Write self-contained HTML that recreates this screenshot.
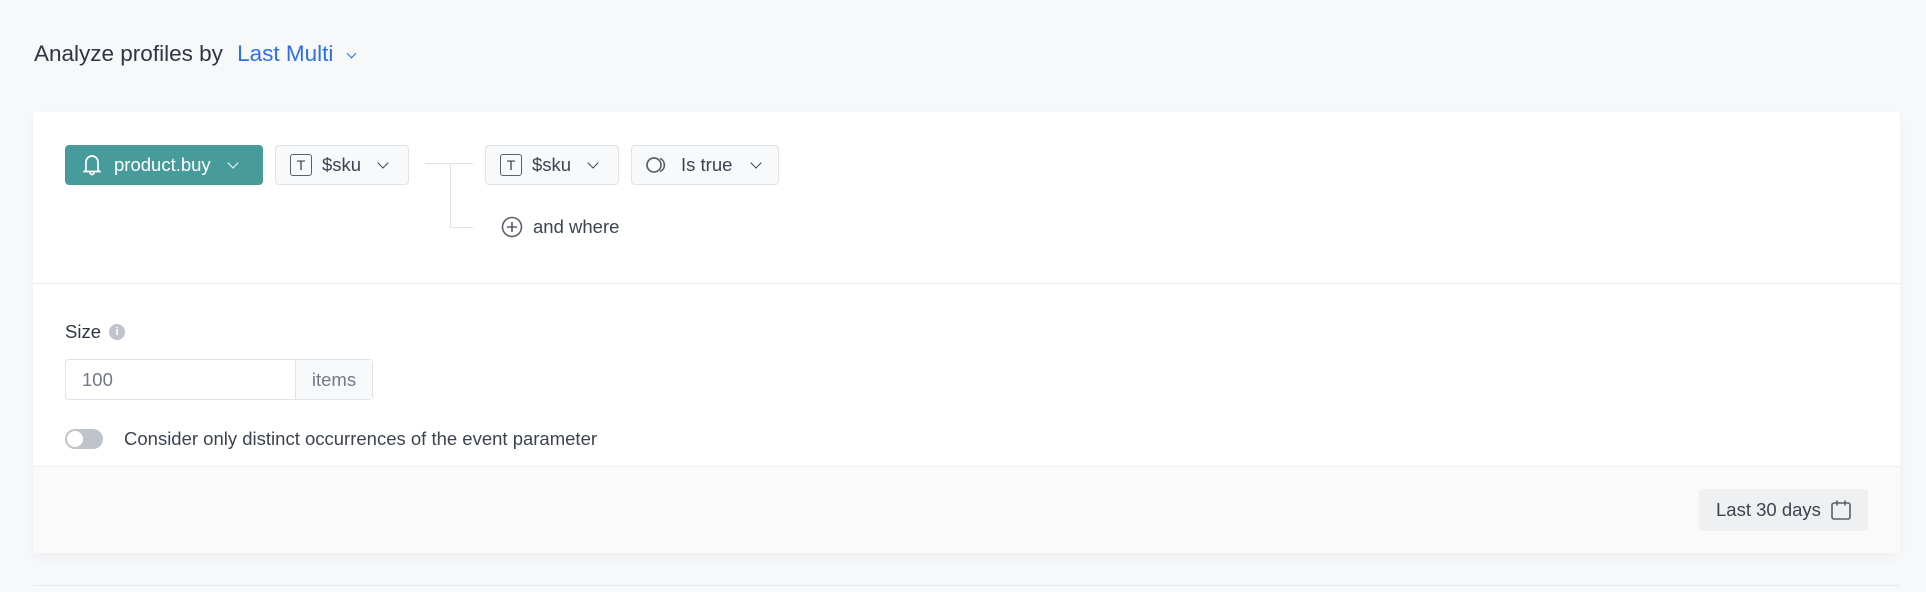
<!DOCTYPE html>
<html><head><meta charset="utf-8"><style>
*{box-sizing:border-box;margin:0;padding:0}
body{width:1926px;height:592px;background:#f7f8fa;font-family:"Liberation Sans",sans-serif;color:#3c4350;position:relative;overflow:hidden}
.abs{position:absolute}
.title{left:34px;top:41px;font-size:22.5px;color:#2f3542}
.title b{font-weight:normal;color:#2f6fe6;margin-left:8px}
.card{left:33px;top:112px;width:1867px;height:441px;background:#fff;border-radius:4px;box-shadow:0 4px 12px rgba(0,0,0,.04)}
.btn{position:absolute;height:40px;border:1px solid #dfe2e7;border-radius:4px;background:#f8f9fa;display:flex;align-items:center;font-size:18.5px;color:#3c4350}
.chev{width:8px;height:8px;border-right:1.8px solid currentColor;border-bottom:1.8px solid currentColor;transform:rotate(45deg);margin-top:-4px}
.tico{width:22px;height:22px;border:1.8px solid #5a606b;border-radius:3px;font-size:14px;display:flex;align-items:center;justify-content:center;margin:0 10px 0 14px}
.line{background:#dfe2e7;position:absolute}
.t{font-size:18.5px}
</style></head><body>
<div class="abs title">Analyze profiles by <b>Last Multi</b> <span class="chev" style="display:inline-block;width:7px;height:7px;color:#2f6fe6;margin-left:8px;position:relative;top:-4px"></span></div>
<div class="abs card">
 <div class="btn" style="left:32px;top:33px;width:198px;background:#479c9b;border-color:#479c9b;color:#fff">
  <svg width="20" height="24" viewBox="0 0 20 24" style="margin:0 12px 0 16px"><path d="M4 17V9a6 6 0 0 1 12 0v8l1.5 1.5h-15z M8 19.5a2 2 0 0 0 4 0" fill="none" stroke="#fff" stroke-width="1.7"/></svg>
  <span>product.buy</span><span class="chev" style="margin-left:18px"></span></div>
 <div class="btn" style="left:242px;top:33px;width:134px"><span class="tico">T</span>$sku<span class="chev" style="margin-left:18px"></span></div>
 <div class="line" style="left:392px;top:51px;width:48px;height:1px"></div>
 <div class="line" style="left:417px;top:51px;width:1px;height:65px"></div>
 <div class="line" style="left:417px;top:115px;width:23px;height:1px"></div>
 <div class="btn" style="left:452px;top:33px;width:134px"><span class="tico">T</span>$sku<span class="chev" style="margin-left:18px"></span></div>
 <div class="btn" style="left:598px;top:33px;width:148px">
  <svg width="26" height="18" viewBox="0 0 26 18" style="margin:0 9px 0 14px"><circle cx="8" cy="9" r="7" fill="none" stroke="#5a606b" stroke-width="1.7"/><path d="M14 2.5A7 7 0 0 1 14 15.5" fill="none" stroke="#5a606b" stroke-width="1.7"/></svg>Is true<span class="chev" style="margin-left:20px"></span></div>
 <svg class="abs" style="left:468px;top:104px" width="22" height="22" viewBox="0 0 22 22"><circle cx="11" cy="11" r="9.5" fill="none" stroke="#5a606b" stroke-width="1.6"/><path d="M11 6v10M6 11h10" stroke="#5a606b" stroke-width="1.6"/></svg>
 <div class="abs t" style="left:500px;top:104px">and where</div>
 <div class="line" style="left:0;top:171px;width:1867px;height:1px;background:#ebedf0"></div>
 <div class="abs t" style="left:32px;top:209px;color:#2f3542">Size</div>
 <div class="abs" style="left:76px;top:212px;width:16px;height:16px;border-radius:50%;background:#bfc3ca;color:#fff;font-size:11px;font-weight:bold;text-align:center;line-height:16px">i</div>
 <div class="abs t" style="left:32px;top:247px;width:308px;height:41px;border:1px solid #dfe2e7;border-radius:4px;display:flex">
  <div style="width:229px;padding-left:16px;line-height:39px;color:#737986">100</div>
  <div style="flex:1;border-left:1px solid #dfe2e7;background:#f8f9fa;line-height:39px;text-align:center;color:#737986">items</div></div>
 <div class="abs" style="left:32px;top:317px;width:38px;height:20px;border-radius:10px;background:#bfc3ca"><div style="position:absolute;left:2px;top:2px;width:16px;height:16px;border-radius:50%;background:#fff"></div></div>
 <div class="abs t" style="left:91px;top:316px">Consider only distinct occurrences of the event parameter</div>
 <div class="abs" style="left:0;top:354px;width:1867px;height:87px;background:#fafafa;border-top:1px solid #eef0f2;border-radius:0 0 4px 4px">
  <div class="abs t" style="left:1666px;top:22px;width:169px;height:42px;background:#eff0f2;border-radius:4px;display:flex;align-items:center;padding-left:17px">Last 30 days
   <svg width="22" height="22" viewBox="0 0 22 22" style="margin-left:9px"><rect x="2" y="4" width="18" height="16" rx="2" fill="none" stroke="#5a606b" stroke-width="1.6"/><path d="M7 1.5v5M15 1.5v5" stroke="#5a606b" stroke-width="1.6"/></svg></div>
 </div>
</div>
<div class="line abs" style="left:33px;top:585px;width:1867px;height:1px;background:#e6e8eb"></div>
</body></html>
